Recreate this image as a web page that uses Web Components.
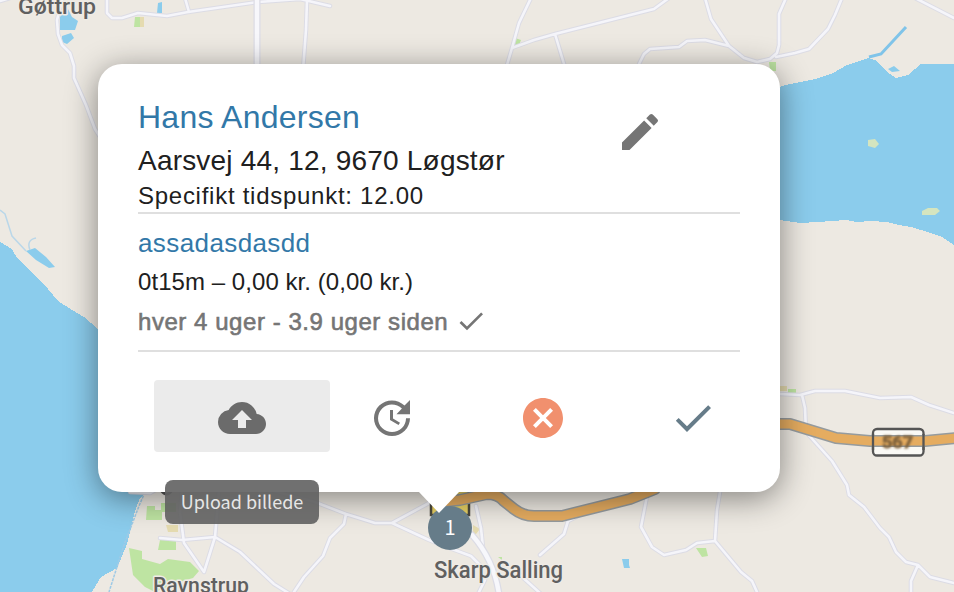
<!DOCTYPE html>
<html lang="da"><head><meta charset="utf-8"><title>Kort</title>
<style>html,body{margin:0;width:954px;height:592px;overflow:hidden}</style></head>
<body><route-view></route-view>
<script>
const define=(name,html)=>customElements.define(name,class extends HTMLElement{
  constructor(){super();this.attachShadow({mode:'open'}).innerHTML=html;}
});
const icons={
 edit:'M3 17.25V21h3.75L17.81 9.94l-3.75-3.75L3 17.25zM20.71 7.04a1 1 0 0 0 0-1.41l-2.34-2.34a1 1 0 0 0-1.41 0l-1.83 1.83 3.75 3.75 1.83-1.83z',
 upload:'M19.35 10.04A7.49 7.49 0 0 0 12 4C9.11 4 6.6 5.64 5.35 8.04A5.994 5.994 0 0 0 0 14c0 3.31 2.69 6 6 6h13c2.76 0 5-2.24 5-5 0-2.64-2.05-4.78-4.65-4.96zM14 13v4h-4v-4H7l5-5 5 5h-3z',
 update:'M21 10.12h-6.78l2.74-2.82c-2.73-2.7-7.15-2.8-9.88-.1-2.73 2.71-2.73 7.08 0 9.79s7.15 2.71 9.88 0C18.32 15.65 19 14.08 19 12.1h2c0 1.98-.88 4.55-2.64 6.29-3.51 3.48-9.21 3.48-12.72 0-3.5-3.47-3.53-9.11-.02-12.58s9.14-3.47 12.65 0L21 3v7.12zM12.5 8v4.25l3.5 2.08-.72 1.21L11 13V8h1.5z',
 cancel:'M12 2C6.47 2 2 6.47 2 12s4.47 10 10 10 10-4.47 10-10S17.53 2 12 2zm5 13.59L15.59 17 12 13.41 8.41 17 7 15.59 10.59 12 7 8.41 8.41 7 12 10.59 15.59 7 17 8.41 13.41 12 17 15.59z',
 check:'M9 16.17L4.83 12l-1.42 1.41L9 19 21 7l-1.41-1.41z'
};
customElements.define('md-icon',class extends HTMLElement{
  constructor(){super();this.attachShadow({mode:'open'});}
  connectedCallback(){this.shadowRoot.innerHTML=`<style>:host{display:block;width:48px;height:48px;flex:none}svg{display:block;width:100%;height:100%;fill:currentColor}</style><svg viewBox="0 0 24 24"><path d="${icons[this.getAttribute('name')]}"/></svg>`;}
});
define('map-canvas',`<style>:host{display:block;width:954px;height:592px}svg{display:block}
.road,#roads path{fill:none;stroke-linejoin:round;stroke-linecap:round}
text{font-family:Roboto,sans-serif;font-weight:500;fill:#606060;stroke:#efebe5;stroke-width:3px;paint-order:stroke;stroke-linejoin:round}</style>
<svg width="954" height="592" viewBox="0 0 954 592">
<defs><g id="roads">
<path d="M0 1L10-2M62 0L57 20 58 34 62 45 70 53 74 66 74 78 86 105 95 129 102 140M107-2L107 13 112 18H122L138 13 167 16 188 12 258 2 300-1 330 6M185-2L189 12M307 0L306 30 303 70"/>
<path d="M531-2L519 23 512 48 507 65M512 48L534 40 555 34 654 9 669-2M555 34L564 64M639 64L644 54 650 49 679 47 687 41 705 40 729 46M705-2L711 19 729 46 744 58 757 62 770 59 777 53 779 45V14L786-2M842-2L835 15 828 29 809 49 795 53 776 57M915-2L954 18"/>
<path d="M780 394L800 395 815 391 845 391 880 398 911 397 929 405 954 413M802 395L805 408 806 432 832 461 847 485 849 495 864 507 880 528 889 537 896 552 906 562 918 565 930 577 954 583M918 565L911 581V592M722 480L717 510 715 541 741 572 752 581 757 592M715 541L697 543 686 550 664 555 652 547 641 527 648 491"/>
<path d="M160 538L182 540 215 537 240 552 274 584 290 594M294 592L304 577 323 556 330 538 344 524 346 514 315 502 270 490M219 490L215 537 204 572 184 543 180 512 182 490M346 514L375 523 392 523 429 540 452 549 471 556 482 567M392 523L429 503M130 492L150 493 166 484"/>
<path d="M476 506L481 528 483 548M540 555L564 534 568 521 578 516M520 575L541 594M485 580L478 594"/>
</g></defs>
<rect width="954" height="592" fill="#ede9e2"/>
<g fill="#8bccec">
<path shape-rendering="crispEdges" d="M0 242L12 249 17 258 43 283 58 301 72 310 84 317 98 329V440H147V492L140 498 135 511 127 544 117 568 101 577 92 592H0Z"/>
<path shape-rendering="crispEdges" d="M770 90L786 85 815 79 833 73 847 65 868 58 877 61 887 72 896 78 908 75 921 64H954V245L942 237 928 232 911 227 899 225 887 222 870 221 857 222 846 220 818 222 800 223 780 220H770Z"/>
<path d="M60 17L66 5 72 17 78 21 75 30H60V22ZM62 36L71 33 74 38 67 44 62 42ZM158 3L162 2V13H157ZM26 251L35 248 46 257 55 267 49 268 36 260ZM622 559H629V565L630 568H624ZM888 69L894 66 900 71 892 72Z"/>
<path d="M869 57L881 54 906 27" fill="none" stroke="#80c4e9" stroke-width="3"/>
</g>
<path d="M0 210L5 214 12 236 26 251M30 250Q26 240 36 238" fill="none" stroke="#bad7e9" stroke-width="1.5"/>
<path d="M145 492L139 506 124 545 109 592" fill="none" stroke="#9fcae6" stroke-width="1.5" stroke-dasharray="3 1"/>
<g fill="#bee4a2"><path d="M135 17H144V27H134ZM769 62H776V71H770ZM147 506H155V510H162V520H146ZM161 503H176V512H161ZM160 540H176V550H158ZM129 548L142 551V559L160 564 168 559 190 562 199 571 193 578 179 582 155 592 145 587 133 575ZM788 389H796V393H788ZM696 548H706L708 556 702 557ZM515 38L521 40 519 45H515ZM498 557H502V560Z"/></g>
<g fill="#d5e5bf"><path d="M868 140L875 139 879 144 875 148 868 146ZM922 211L928 208 937 208 940 211 935 215H922Z"/></g>
<path fill="#e5dbb0" d="M166 525H178V532H168ZM473 525L480 529 476 534H473ZM780 386H787V391H780ZM140 17H144V27H140Z"/>
<g class="road"><use href="#roads" stroke="#dcdce5" stroke-width="4.5"/><use href="#roads" stroke="#f5f5fa" stroke-width="2.6"/>
<path d="M257-2V70M472 535Q494 560 499 594" stroke="#dcdce5" stroke-width="7"/><path d="M257-2V70M472 535Q494 560 499 594" stroke="#f7f7fb" stroke-width="4.5"/></g>
<rect x="431" y="480" width="38" height="35" fill="#e8d164" stroke="#4b493d" stroke-width="2.5"/>
<rect x="873" y="429" width="50.500" height="26.500" rx="4" fill="#faf9f5" stroke="#555" stroke-width="2.3"/>
<g class="road"><path d="M440 502L460 500 487 494Q498 494 504 501L514 509Q523 516 534 516H562L630 499 655 489M770 424H790L836 438 870 441H925L956 438" stroke="#959b9e" stroke-width="12"/><path d="M440 502L460 500 487 494Q498 494 504 501L514 509Q523 516 534 516H562L630 499 655 489M770 424H790L836 438 870 441H925L956 438" stroke="#e5ac60" stroke-width="9"/></g>
<path d="M873 434V450M923.500 434V450" stroke="#555" stroke-width="2.3"/>
<text x="882" y="448" style="font-size:17px;stroke:#80633d;stroke-width:.8px;fill:#80633d;font-weight:700;filter:blur(.8px)" textLength="31" lengthAdjust="spacingAndGlyphs">567</text>
<text x="18" y="14" font-size="22" textLength="78" lengthAdjust="spacingAndGlyphs">Gøttrup</text>
<text x="153" y="593" font-size="22" textLength="96" lengthAdjust="spacingAndGlyphs">Ravnstrup</text>
<text x="434" y="578" font-size="23" textLength="129" lengthAdjust="spacingAndGlyphs">Skarp Salling</text>
<path d="M161 490Q167 498 172 490" fill="none" stroke="#555" stroke-width="3"/>
</svg>`);
define('visit-card',`<style>
:host{display:flex;flex-direction:column;box-sizing:border-box;width:682px;height:428px;padding:32px 40px 0;border-radius:24px;background:#fff;box-shadow:0 6px 32px rgba(0,0,0,.45);font-family:"Liberation Sans",sans-serif;color:#202020;white-space:nowrap}
header{display:flex;height:116px;border-bottom:2px solid #dfdfdf}
.who{width:478px;flex:none}.name{font-size:32px;line-height:42px;letter-spacing:.25px;color:#3278a8}
.addr{font-size:28px;line-height:45px;letter-spacing:.2px}.time{font-size:24px;line-height:25px;letter-spacing:.73px}
header md-icon{margin-top:12px;color:#757575}
section{height:136px;border-bottom:2px solid #dfdfdf;font-size:24px}
.task{font-size:26px;line-height:40px;padding-top:9px;letter-spacing:.4px;color:#3278a8}
.price{line-height:38px;letter-spacing:.06px}.freq{display:flex;align-items:center;height:38px;margin-top:2px;letter-spacing:.55px;color:#757575;-webkit-text-stroke:.6px #757575}
.freq md-icon{width:32px;height:32px;margin:-2px 0 0 7px}
</style><header><div class="who"><div class="name">Hans Andersen</div><div class="addr">Aarsvej 44, 12, 9670 Løgstør</div><div class="time">Specifikt tidspunkt: 12.00</div></div><md-icon name="edit"></md-icon></header>
<section><div class="task">assadasdasdd</div><div class="price">0t15m – 0,00 kr. (0,00 kr.)</div><div class="freq"><span>hver 4 uger - 3.9 uger siden</span><md-icon name="check"></md-icon></div></section><slot></slot>`);
define('card-actions',`<style>:host{display:flex;align-items:flex-start;margin-top:28px;padding-left:16px;height:72px;color:#757575}
.up{box-sizing:border-box;width:176px;height:72px;padding-top:14px;display:flex;justify-content:center;background:#ebebeb;border-radius:4px;color:#6b6b6b}
:host>md-icon,.act{margin-top:14px}</style>
<div class="up"><md-icon name="upload"></md-icon></div><md-icon class="act" name="update" style="margin-left:38px"></md-icon><md-icon class="act" name="cancel" style="margin-left:103px;color:#f1906e"></md-icon><md-icon class="act" name="check" style="margin-left:102px;color:#667c89"></md-icon>`);
define('stop-pin',`<style>:host{display:flex;align-items:center;justify-content:center;box-sizing:border-box;width:44px;height:44px;padding-bottom:3px;border-radius:50%;background:#667c89;color:#fff;font:20px/30px "Noto Sans CJK SC",sans-serif}</style><slot></slot>`);
define('tool-tip',`<style>:host{display:flex;align-items:center;justify-content:center;box-sizing:border-box;width:154px;height:44px;padding-bottom:3px;border-radius:8px;background:rgba(97,97,97,.9);color:#e6e6e6;font:18px "Noto Sans CJK SC",sans-serif;white-space:nowrap}</style><slot></slot>`);
define('route-view',`<style>:host{display:block;position:relative;width:954px;height:592px;overflow:hidden}
visit-card{position:absolute;left:98px;top:64px}stop-pin{position:absolute;left:428px;top:506px}
.tip{position:absolute;left:418px;top:491px;width:42px;height:22px;background:#fff;clip-path:polygon(0 0,100% 0,50% 100%)}
tool-tip{position:absolute;left:165px;top:480px}</style>
<map-canvas></map-canvas><visit-card><card-actions></card-actions></visit-card><stop-pin>1</stop-pin><div class="tip"></div><tool-tip>Upload billede</tool-tip>`);
</script></body></html>
